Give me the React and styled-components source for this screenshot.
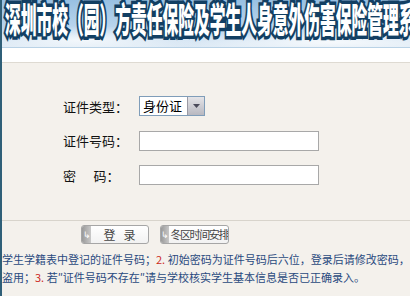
import React from 'react';
import styled, { createGlobalStyle } from 'styled-components';

const GlobalStyle = createGlobalStyle`
    html, body {
        margin: 0;
        padding: 0;
        background: #f4f1ec;
    }
    body {
        font-family: "Noto Sans CJK SC", "Liberation Sans", sans-serif;
    }
`;

const Page = styled.div`
    width: 410px;
    height: 296px;
    overflow: hidden;
    background: #f4f1ec;
    border-left: 2px solid #2f5f78;
    box-sizing: border-box;
`;

const Banner = styled.div`
    height: 47px;
    overflow: hidden;
    white-space: nowrap;
    background:
        radial-gradient(ellipse 120px 14px at 80px 40px, rgba(255,255,255,0.75), rgba(255,255,255,0)),
        radial-gradient(ellipse 160px 12px at 330px 42px, rgba(255,255,255,0.8), rgba(255,255,255,0)),
        linear-gradient(180deg, #98c0e2 0%, #b8d4ec 55%, #dce9f5 100%);
    border-bottom: 1px solid #b9d2e6;
`;

const Title = styled.div`
    display: inline-block;
    font-family: "Noto Sans CJK SC", sans-serif;
    font-size: 35px;
    font-weight: 900;
    line-height: 38px;
    color: #ffffff;
    -webkit-text-stroke: 7px #123f63;
    paint-order: stroke fill;
    transform: scaleX(0.45);
    transform-origin: left top;
    margin: -1px 0 0 3px;
`;

const WhiteBand = styled.div`
    height: 14px;
    background: #ffffff;
    border-bottom: 1px solid #dedad2;
`;

const Form = styled.div`
    display: grid;
    grid-template-columns: 76px auto;
    grid-auto-rows: 34.5px;
    align-items: center;
    padding: 26px 0 0 61px;
    height: 131px;
`;

const Label = styled.div`
    font-size: 13px;
    color: #111;
    white-space: pre;
`;

const SelectBox = styled.div`
    display: flex;
    width: 66px;
    height: 20px;
    box-sizing: border-box;
    border: 1px solid #7f9db9;
    background: #fff;
`;

const SelectText = styled.div`
    flex: 1;
    font-size: 13px;
    line-height: 18px;
    padding-left: 3px;
    color: #000;
`;

const SelectArrow = styled.div`
    width: 16px;
    display: flex;
    align-items: center;
    justify-content: center;
    background: linear-gradient(180deg, #e4e4e8, #b8b8c0);
    border-left: 1px solid #9a9aa4;
`;

const TextInput = styled.div`
    width: 180px;
    height: 20px;
    box-sizing: border-box;
    border: 1px solid #a8a8a8;
    background: #fff;
`;

const Divider = styled.div`
    border-top: 1px solid #d8d4cc;
`;

const ButtonRow = styled.div`
    display: flex;
    gap: 11px;
    padding: 4px 0 0 79px;
`;

const Button = styled.div`
    display: flex;
    width: ${p => p.width}px;
    height: 19px;
    box-sizing: border-box;
    border: 1px solid #a6a6a6;
    border-radius: 3px;
    background: linear-gradient(180deg, #ffffff, #f2f2f2);
    overflow: hidden;
`;

const ButtonIcon = styled.div`
    width: 9px;
    background: linear-gradient(90deg, #9a9a9a, #c8c8c8);
    color: #fff;
    font-size: 9px;
    line-height: 17px;
    text-align: center;
`;

const ButtonText = styled.div`
    flex: 1;
    font-size: ${p => p.size}px;
    letter-spacing: ${p => p.spacing}px;
    line-height: 17px;
    color: #444;
    white-space: pre;
    text-align: ${p => p.align};
    padding-left: ${p => p.pad}px;
`;

const Notes = styled.div`
    padding-top: 6px;
    font-size: 11px;
    line-height: 18px;
    color: #2a4a80;
    white-space: nowrap;
`;

const Red = styled.span`
    color: #cc2a1e;
`;

const App = () => {
    return (
        <Page>
            <GlobalStyle />
            <Banner>
                <Title>深圳市校（园）方责任保险及学生人身意外伤害保险管理系统</Title>
            </Banner>
            <WhiteBand />

            <Form>
                <Label>证件类型：</Label>
                <SelectBox>
                    <SelectText>身份证</SelectText>
                    <SelectArrow>
                        <svg width="7" height="4" viewBox="0 0 7 4">
                            <path d="M0 0 L7 0 L3.5 4 Z" fill="#4a4a5a" />
                        </svg>
                    </SelectArrow>
                </SelectBox>

                <Label>证件号码：</Label>
                <TextInput />

                <Label>{'密      码：'}</Label>
                <TextInput />
            </Form>

            <Divider />

            <ButtonRow>
                <Button width={68}>
                    <ButtonIcon>↳</ButtonIcon>
                    <ButtonText size={12} spacing={0} align="center" pad={0}>{'登   录'}</ButtonText>
                </Button>
                <Button width={69}>
                    <ButtonIcon>↳</ButtonIcon>
                    <ButtonText size={11} spacing={-1.4} align="left" pad={1}>冬区时间安排</ButtonText>
                </Button>
            </ButtonRow>

            <Notes>
                学生学籍表中登记的证件号码；<Red>2.</Red> 初始密码为证件号码后六位，登录后请修改密码，
                <br />
                盗用；<Red>3.</Red> 若″证件号码不存在″请与学校核实学生基本信息是否已正确录入。
            </Notes>
        </Page>
    );
};

export default App;
